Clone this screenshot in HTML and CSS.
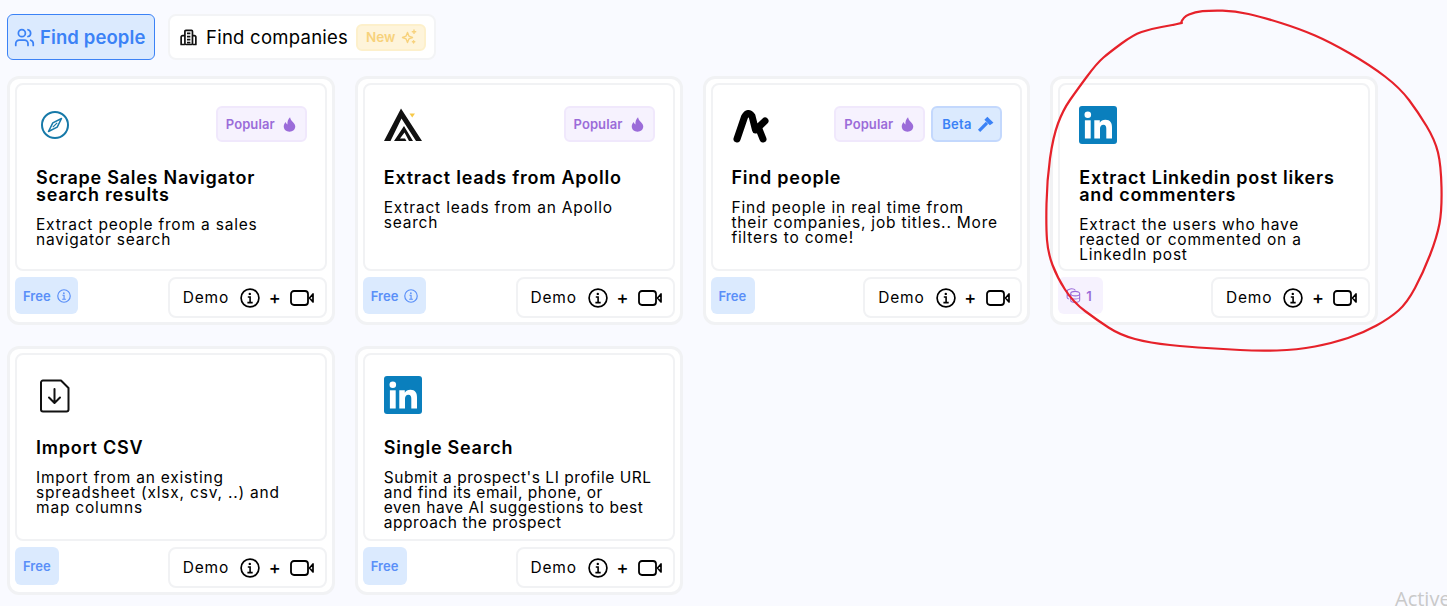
FILE: index.html
```html
<!DOCTYPE html>
<html lang="en">
<head>
<meta charset="utf-8">
<title>Find people</title>
<link rel="stylesheet" href="styles.css">
</head>
<body>
<svg class="sprite" aria-hidden="true">
  <symbol id="flame" viewBox="0 0 14 16"><path fill="currentColor" d="M7.6 0.3C8 3 9.2 3.9 10.6 5.3C12.3 7 13.2 8.6 13.2 10.2C13.2 13.3 10.6 15.7 7 15.7C3.4 15.7 0.8 13.3 0.8 10.2C0.8 8.2 1.7 6.6 3 5.4C3.2 6.8 3.9 7.6 4.8 7.9C4.6 5 5.4 2.2 7.6 0.3Z"/></symbol>
  <symbol id="info" viewBox="0 0 20 20"><circle cx="10" cy="10" r="8.9" fill="none" stroke="currentColor" stroke-width="1.7"/><circle cx="9.8" cy="5.9" r="1.2" fill="currentColor"/><path fill="none" stroke="currentColor" stroke-width="1.6" d="M7.8 9H10.1V14.6M7.4 14.6H12.7"/></symbol>
  <symbol id="video" viewBox="0 0 24 16"><rect x="1" y="1" width="17" height="14" rx="3" fill="none" stroke="currentColor" stroke-width="1.8"/><path fill="none" stroke="currentColor" stroke-width="1.7" stroke-linejoin="round" d="M19.5 8L23 4V12Z"/></symbol>
  <symbol id="linkedin" viewBox="0 0 38 38"><rect width="38" height="38" rx="3" fill="#0a7fbd"/><circle cx="8.8" cy="8.8" r="3.3" fill="#fff"/><rect x="5.9" y="14.3" width="5.8" height="18.2" fill="#fff"/><path fill="#fff" d="M15.3 14.3H20.8V16.8C21.8 15 23.8 13.8 26.4 13.8C31.3 13.8 33 16.9 33 21.6V32.5H27.3V22.8C27.3 20.5 26.7 18.8 24.4 18.8C22 18.8 21 20.5 21 22.8V32.5H15.3Z"/></symbol>
</svg>

<main class="page">
  <nav class="tabs">
    <button class="tab tab-active">
      <svg class="tab-icon" viewBox="0 0 24 24" fill="none" stroke="currentColor" stroke-width="2" stroke-linecap="round" stroke-linejoin="round"><path d="M16 21v-2a4 4 0 0 0-4-4H6a4 4 0 0 0-4 4v2"/><circle cx="9" cy="7" r="4"/><path d="M22 21v-2a4 4 0 0 0-3-3.87"/><path d="M16 3.13a4 4 0 0 1 0 7.75"/></svg>
      <span>Find people</span>
    </button>
    <button class="tab tab-plain">
      <svg class="tab-icon" viewBox="0 0 18 18" fill="none" stroke="#111" stroke-width="1.8" stroke-linejoin="round"><rect x="5.2" y="1.4" width="8" height="15" rx="1"/><path d="M5.2 7H2.8A1.6 1.6 0 0 0 1.2 8.6V16.4H5.2M13.2 7H15.2A1.6 1.6 0 0 1 16.8 8.6V16.4H13.2M7.4 4.6H11M7.4 8H11M7.4 11.2H11M7.4 14.4H11"/></svg>
      <span>Find companies</span>
      <span class="new-badge">New
        <svg class="spark" viewBox="0 0 16 16" fill="none" stroke="currentColor" stroke-width="1.4" stroke-linejoin="round"><path d="M6.5 3.5L7.9 7.1L11.5 8.5L7.9 9.9L6.5 13.5L5.1 9.9L1.5 8.5L5.1 7.1Z"/><path d="M13 1V4.4M11.3 2.7H14.7M12.6 11.6V14M11.4 12.8H13.8" stroke-linecap="round"/></svg>
      </span>
    </button>
  </nav>

  <section class="grid">
    <article class="card">
      <div class="card-main">
        <header class="card-head">
          <svg class="logo logo-compass" viewBox="0 0 30 30" fill="none" stroke="#1679a8"><circle cx="15" cy="15" r="13" stroke-width="2"/><path stroke-width="1.5" stroke-linejoin="round" d="M21.5 8.5L17.2 17.2L8.5 21.5L12.8 12.8Z"/><path stroke-width="1.2" d="M12.8 17.2L17.2 12.8"/></svg>
          <div class="badges"><span class="badge badge-popular">Popular <svg class="badge-icon"><use href="#flame"/></svg></span></div>
        </header>
        <h3>Scrape Sales Navigator<br>search results</h3>
        <p>Extract people from a sales<br>navigator search</p>
      </div>
      <footer class="card-foot">
        <span class="plan plan-free">Free <svg class="plan-info"><use href="#info"/></svg></span>
        <span class="demo">Demo <svg class="demo-info"><use href="#info"/></svg><b>+</b><svg class="demo-video"><use href="#video"/></svg></span>
      </footer>
    </article>

    <article class="card">
      <div class="card-main">
        <header class="card-head">
          <svg class="logo logo-brand" viewBox="0 0 38 38"><path fill="#111" d="M0 34L17 1.5L38 34H32L17.5 11.5L6.5 34Z"/><path fill="#111" d="M10 34L20 19L29 34H25L20.5 25.5L16 31.5H21L22.5 34Z"/><path fill="#f7c948" d="M25.5 6.5H31L28.2 10.5Z"/></svg>
          <div class="badges"><span class="badge badge-popular">Popular <svg class="badge-icon"><use href="#flame"/></svg></span></div>
        </header>
        <h3>Extract leads from Apollo</h3>
        <p>Extract leads from an Apollo<br>search</p>
      </div>
      <footer class="card-foot">
        <span class="plan plan-free">Free <svg class="plan-info"><use href="#info"/></svg></span>
        <span class="demo">Demo <svg class="demo-info"><use href="#info"/></svg><b>+</b><svg class="demo-video"><use href="#video"/></svg></span>
      </footer>
    </article>

    <article class="card">
      <div class="card-main">
        <header class="card-head">
          <svg class="logo logo-brand" viewBox="0 0 38 38" fill="none" stroke="#000" stroke-width="7" stroke-linecap="round" stroke-linejoin="round"><path d="M5 32L12.5 10Q16 3.5 20 9L23.5 23L33 14"/><path d="M27 22L31 32"/></svg>
          <div class="badges">
            <span class="badge badge-popular">Popular <svg class="badge-icon"><use href="#flame"/></svg></span>
            <span class="badge badge-beta">Beta
              <svg class="badge-icon badge-hammer" viewBox="0 0 18 18"><path fill="currentColor" d="M1 14.6L9.4 6.2L11.8 8.6L3.4 17Z"/><path fill="currentColor" d="M7.8 4L11 0.8L17.4 7.2L13.6 9.8Z"/></svg>
            </span>
          </div>
        </header>
        <h3>Find people</h3>
        <p>Find people in real time from<br>their companies, job titles.. More<br>filters to come!</p>
      </div>
      <footer class="card-foot">
        <span class="plan plan-free plan-short">Free</span>
        <span class="demo">Demo <svg class="demo-info"><use href="#info"/></svg><b>+</b><svg class="demo-video"><use href="#video"/></svg></span>
      </footer>
    </article>

    <article class="card">
      <div class="card-main">
        <header class="card-head">
          <svg class="logo logo-linkedin"><use href="#linkedin"/></svg>
        </header>
        <h3>Extract Linkedin post likers<br>and commenters</h3>
        <p>Extract the users who have<br>reacted or commented on a<br>LinkedIn post</p>
      </div>
      <footer class="card-foot">
        <span class="plan plan-credit">
          <svg class="plan-db" viewBox="0 0 16 16" fill="none" stroke="currentColor" stroke-width="1.1"><ellipse cx="9.8" cy="6" rx="4.8" ry="2.4"/><path d="M5 6V13C5 14.3 7.2 15.2 9.8 15.2S14.6 14.3 14.6 13V6M5 9.5C5 10.8 7.2 11.7 9.8 11.7S14.6 10.8 14.6 9.5"/><path d="M10 2.4C8.8 1 6.6 0.7 4.6 1C2.6 1.3 1.2 2.2 1.2 3.4V10C1.2 10.7 2 11.4 3.4 11.8M1.2 6.6C1.2 7.5 2.2 8.2 3.4 8.6"/></svg>
          1
        </span>
        <span class="demo">Demo <svg class="demo-info"><use href="#info"/></svg><b>+</b><svg class="demo-video"><use href="#video"/></svg></span>
      </footer>
    </article>

    <article class="card">
      <div class="card-main">
        <header class="card-head">
          <svg class="logo logo-file" viewBox="0 0 30 34" fill="none" stroke="#111" stroke-width="2" stroke-linecap="round" stroke-linejoin="round"><path d="M3 1.5H21L28.5 9V30.5A2 2 0 0 1 26.5 32.5H3A2 2 0 0 1 1 30.5V3.5A2 2 0 0 1 3 1.5Z"/><path d="M14.5 10V23.5M9 18.5L14.5 24L20 18.5"/></svg>
        </header>
        <h3>Import CSV</h3>
        <p>Import from an existing<br>spreadsheet (xlsx, csv, ..) and<br>map columns</p>
      </div>
      <footer class="card-foot">
        <span class="plan plan-free plan-short plan-tall">Free</span>
        <span class="demo">Demo <svg class="demo-info"><use href="#info"/></svg><b>+</b><svg class="demo-video"><use href="#video"/></svg></span>
      </footer>
    </article>

    <article class="card">
      <div class="card-main">
        <header class="card-head">
          <svg class="logo logo-linkedin"><use href="#linkedin"/></svg>
        </header>
        <h3>Single Search</h3>
        <p class="tight">Submit a prospect's LI profile URL<br>and find its email, phone, or<br>even have AI suggestions to best<br>approach the prospect</p>
      </div>
      <footer class="card-foot">
        <span class="plan plan-free plan-short plan-tall">Free</span>
        <span class="demo">Demo <svg class="demo-info"><use href="#info"/></svg><b>+</b><svg class="demo-video"><use href="#video"/></svg></span>
      </footer>
    </article>
  </section>
</main>

<svg class="scribble" viewBox="0 0 1447 606" aria-hidden="true">
  <path d="M1173 25L1181 23Q1183 17 1189 14.5Q1195 12 1202.5 11.2Q1210 10.5 1222.5 10.7Q1235 11 1248.5 14Q1262 17 1281 23Q1300 29 1315 35.5Q1330 42 1350 53.5Q1370 65 1385 76.5Q1400 88 1409 100Q1418 112 1426.5 126Q1435 140 1438 152.5Q1441 165 1441.5 187.5Q1442 210 1439.5 223.5Q1437 237 1430 255Q1423 273 1415 288Q1407 303 1398.5 310.5Q1390 318 1376.5 325.5Q1363 333 1348 338Q1333 343 1315 346.5Q1297 350 1277 350.5Q1257 351 1240 350Q1223 349 1206.5 348Q1190 347 1170 345Q1150 343 1135 339Q1120 335 1108.5 327.5Q1097 320 1085 311Q1073 302 1065 289.5Q1057 277 1052.5 265Q1048 253 1047 240Q1046 227 1046.5 203.5Q1047 180 1050 158.5Q1053 137 1058 123.5Q1063 110 1070 100Q1077 90 1087 76.5Q1097 63 1103.5 57.5Q1110 52 1121.5 43.5Q1133 35 1141.5 32Q1150 29 1161.5 27Q1173 25 1182 23"/>
</svg>
<span class="watermark">Active</span>
</body>
</html>
```
FILE: styles.css
```css
* {
  box-sizing: border-box;
}

html,
body {
  margin: 0;
  height: 606px;
  overflow: hidden;
}

body {
  position: relative;
  background: #f9faff;
  color: #000;
  font-family: Inter, "Noto Sans", sans-serif;
}

.sprite {
  display: none;
}

.page {
  width: 1386px;
  padding: 14px 8px 0 7px;
}

.tabs {
  display: flex;
  gap: 13px;
  height: 46px;
}

.tab {
  display: flex;
  align-items: center;
  height: 46px;
  margin: 0;
  font: inherit;
  font-size: 18.5px;
  white-space: nowrap;
  cursor: pointer;
}

.tab-active {
  width: 148px;
  gap: 5px;
  padding: 0 6px;
  background: #dbeafe;
  border: 1px solid #3b82f6;
  border-radius: 6px;
  color: #3b82f6;
  font-weight: 600;
  letter-spacing: 0.1px;
}

.tab-plain {
  width: 268px;
  gap: 8px;
  padding: 0 8px 0 10px;
  background: #fff;
  border: 2px solid #f3f4f6;
  border-radius: 8px;
  color: #000;
  letter-spacing: 0.25px;
}

.tab-icon {
  flex: none;
  width: 21px;
  height: 21px;
}

.tab-plain .tab-icon {
  width: 17px;
  height: 17px;
  margin-right: 1px;
}

.new-badge {
  display: flex;
  align-items: center;
  gap: 6px;
  width: 70px;
  height: 27px;
  padding: 0 0 0 8px;
  background: #fef4da;
  border: 2px solid #fdf0cb;
  border-radius: 6px;
  color: #f7d27c;
  font-size: 13.5px;
  font-weight: 600;
  letter-spacing: 0;
}

.spark {
  width: 16px;
  height: 16px;
}

.grid {
  display: grid;
  grid-template-columns: repeat(4, 1fr);
  grid-auto-rows: 250px;
  gap: 20px;
  margin-top: 16px;
}

.card {
  display: flex;
  flex-direction: column;
  gap: 6px;
  height: 249px;
  padding: 4px 5px 4px 5px;
  background: #fff;
  border: 3px solid #f1f2f4;
  border-radius: 12px;
}

.card-main {
  flex: none;
  height: 188px;
  padding: 21px 18px 0 19px;
  background: #fff;
  border: 2px solid #f1f2f4;
  border-radius: 8px;
}

.card-head {
  display: flex;
  justify-content: space-between;
  height: 36px;
  margin-bottom: 27px;
}

.logo {
  display: block;
  flex: none;
}

.logo-compass {
  width: 30px;
  height: 30px;
  margin: 4px 0 0 4px;
}

.logo-brand {
  width: 38px;
  height: 38px;
  margin-top: 1px;
}

.logo-linkedin {
  width: 38px;
  height: 38px;
}

.logo-file {
  width: 30px;
  height: 34px;
  margin: 3px 0 0 4px;
}

.badges {
  display: flex;
  gap: 6px;
}

.badge {
  display: flex;
  align-items: center;
  gap: 8px;
  height: 36px;
  padding: 0 8px;
  border: 2px solid;
  border-radius: 6px;
  font-size: 13px;
  font-weight: 600;
  letter-spacing: 0.1px;
}

.badge-popular {
  width: 91px;
  background: #f6f2fe;
  border-color: #f0e8fc;
  color: #9b6cd9;
}

.badge-beta {
  width: 71px;
  gap: 5px;
  padding: 0 0 0 9px;
  background: #dbeafe;
  border-color: #c3d8fd;
  color: #3b82f6;
  letter-spacing: 0.3px;
}

.badge-icon {
  width: 13px;
  height: 15px;
  flex: none;
  color: inherit;
}

.badge-hammer {
  width: 17px;
  height: 17px;
}

h3 {
  margin: 0;
  font-size: 18px;
  font-weight: 600;
  line-height: 17px;
  letter-spacing: 0.75px;
}

p {
  margin: 14px 0 0;
  font-size: 15.5px;
  line-height: 15px;
  letter-spacing: 0.8px;
  white-space: nowrap;
}

p.tight {
  letter-spacing: 0.55px;
}

.card-foot {
  display: flex;
  align-items: flex-start;
  justify-content: space-between;
}

.plan {
  display: flex;
  align-items: center;
  gap: 6px;
  height: 37px;
  padding: 0 8px;
  border-radius: 6px;
  font-size: 13px;
  font-weight: 600;
}

.plan-free {
  width: 63px;
  background: #dbeafe;
  color: #5a8ff8;
}

.plan-short {
  width: 44px;
}

.plan-tall {
  height: 38px;
}

.plan-info {
  width: 14px;
  height: 14px;
  flex: none;
}

.plan-credit {
  width: 45px;
  gap: 5px;
  background: #f6f2fe;
  color: #9b6cd9;
}

.plan-db {
  width: 15px;
  height: 15px;
  flex: none;
}

.demo {
  display: flex;
  align-items: center;
  width: 159px;
  height: 41px;
  padding: 0 0 0 13px;
  background: #fff;
  border: 2px solid #f1f2f4;
  border-radius: 8px;
  font-size: 15.5px;
  letter-spacing: 0.8px;
}

.demo-info {
  width: 20px;
  height: 20px;
  margin-left: 11px;
  flex: none;
}

.demo b {
  width: 30px;
  font-size: 18px;
  font-weight: 500;
  text-align: center;
  line-height: 1;
}

.demo-video {
  width: 24px;
  height: 16px;
  flex: none;
}

.scribble {
  position: absolute;
  top: 0;
  left: 0;
  width: 1447px;
  height: 606px;
  fill: none;
  stroke: #e6212a;
  stroke-width: 2.2;
  stroke-linecap: round;
  stroke-linejoin: round;
  pointer-events: none;
}

.watermark {
  position: absolute;
  top: 585px;
  left: 1395px;
  color: #c9c9c9;
  font-family: "Open Sans", sans-serif;
  font-size: 20px;
  line-height: 27px;
}
```
